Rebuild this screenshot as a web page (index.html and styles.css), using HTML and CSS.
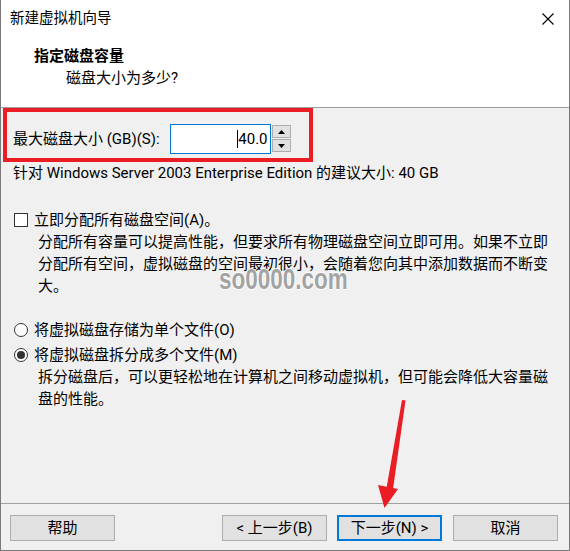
FILE: index.html
```html
<!DOCTYPE html>
<html lang="zh-CN">
<head>
<meta charset="utf-8">
<title>新建虚拟机向导</title>
<link rel="stylesheet" href="styles.css">
</head>
<body>
<div class="window">
  <div class="titlebar">
    <span class="title">新建虚拟机向导</span>
    <svg class="close" width="12" height="12" viewBox="0 0 12 12"><path d="M0.5 0.5 L11.5 11.5 M11.5 0.5 L0.5 11.5" stroke="#000" stroke-width="1.1" fill="none"/></svg>
  </div>
  <div class="header">
    <div class="h-title">指定磁盘容量</div>
    <div class="h-sub">磁盘大小为多少?</div>
  </div>
  <div class="content">
    <div class="size-row">
      <span class="label">最大磁盘大小 (GB)(S):</span>
      <div class="spinbox">
        <div class="input"><span class="caret"></span>40.0</div>
        <div class="spin-btns">
          <div class="spin-btn"><svg width="7" height="4" viewBox="0 0 7 4"><path d="M3.5 0 L7 4 L0 4 Z" fill="#000"/></svg></div>
          <div class="spin-btn"><svg width="7" height="4" viewBox="0 0 7 4"><path d="M0 0 L7 0 L3.5 4 Z" fill="#000"/></svg></div>
        </div>
      </div>
    </div>
    <p class="hint">针对 Windows Server 2003 Enterprise Edition 的建议大小: 40 GB</p>
    <div class="option opt-check"><span class="checkbox"></span><span>立即分配所有磁盘空间(A)。</span></div>
    <p class="desc">分配所有容量可以提高性能，但要求所有物理磁盘空间立即可用。如果不立即分配所有空间，虚拟磁盘的空间最初很小，会随着您向其中添加数据而不断变大。</p>
    <div class="option opt-r1"><span class="radio"></span><span>将虚拟磁盘存储为单个文件(O)</span></div>
    <div class="option opt-r2"><span class="radio checked"></span><span>将虚拟磁盘拆分成多个文件(M)</span></div>
    <p class="desc">拆分磁盘后，可以更轻松地在计算机之间移动虚拟机，但可能会降低大容量磁盘的性能。</p>
  </div>
  <div class="footer">
    <button class="btn">帮助</button>
    <button class="btn btn-back">&lt; 上一步(B)</button>
    <button class="btn btn-next">下一步(N) &gt;</button>
    <button class="btn">取消</button>
  </div>

  <div class="red-box"></div>
  <div class="watermark">so0000.com</div>
  <svg class="arrow" width="40" height="115" viewBox="370 398 40 115">
    <path d="M402 400 L405.5 400.5 L393 489 L386.5 488 Z" fill="#ea1c24"/>
    <path d="M378 485 L398 489 L384.5 508 Z" fill="#ea1c24"/>
  </svg>
</div>
</body>
</html>
```
FILE: styles.css
```css
* { box-sizing: border-box; }
html, body { margin: 0; padding: 0; }
body {
  width: 570px;
  height: 551px;
  font-family: "Roboto", "Noto Sans CJK SC", sans-serif;
  font-size: 15px;
  color: #000;
  background: #f0f0f0;
}
.window {
  position: relative;
  width: 570px;
  height: 551px;
  background: #f0f0f0;
  border-left: 1px solid #7a7a7a;
  border-right: 1px solid #7a7a7a;
  border-bottom: 1px solid #7a7a7a;
  display: flex;
  flex-direction: column;
}
.titlebar {
  height: 38px;
  background: #fff;
  display: flex;
  align-items: center;
  justify-content: space-between;
  padding: 0 15px 0 9px;
}
.title {
  font-size: 14.5px;
  line-height: 20px;
}
.close { display: block; }
.header {
  height: 70px;
  background: #fff;
  padding: 7px 0 0 33px;
  border-bottom: 1px solid #a0a0a0;
}
.h-title {
  font-weight: bold;
  line-height: 22px;
}
.h-sub {
  line-height: 22px;
  padding-left: 32px;
}
.content {
  flex: 1;
  padding: 16px 12px 0 12px;
  display: flex;
  flex-direction: column;
}
.size-row {
  display: flex;
  align-items: center;
  height: 30px;
}
.label { line-height: 22px; }
.spinbox {
  display: flex;
  margin-left: 10px;
  height: 30px;
}
.input {
  width: 101px;
  height: 30px;
  background: #fff;
  border: 1px solid #0078d7;
  display: flex;
  align-items: center;
  justify-content: flex-end;
  padding-right: 2px;
  line-height: 22px;
}
.caret {
  display: inline-block;
  width: 1px;
  height: 18px;
  background: #000;
}
.spin-btns {
  display: flex;
  flex-direction: column;
  padding: 1px 0;
  gap: 1px;
  margin-left: 1px;
}
.spin-btn {
  width: 19px;
  height: 13px;
  background: #e1e1e1;
  border: 1px solid #adadad;
  display: flex;
  align-items: center;
  justify-content: center;
}
.spin-btn svg { display: block; }
.hint {
  margin: 8px 0 0 0;
  line-height: 22px;
}
.option {
  display: flex;
  align-items: center;
  gap: 6px;
  line-height: 22px;
  padding-left: 1px;
}
.opt-check { margin-top: 25px; }
.opt-r1 { margin-top: 22px; }
.opt-r2 { margin-top: 3px; }
.checkbox {
  flex: none;
  width: 14px;
  height: 14px;
  background: #fff;
  border: 1px solid #333;
}
.radio {
  flex: none;
  width: 14px;
  height: 14px;
  border-radius: 50%;
  background: #fff;
  border: 1px solid #333;
  display: flex;
  align-items: center;
  justify-content: center;
}
.radio.checked::after {
  content: "";
  width: 8px;
  height: 8px;
  border-radius: 50%;
  background: #333;
}
.desc {
  margin: 0;
  padding-left: 25px;
  padding-right: 6px;
  line-height: 22px;
}
.footer {
  height: 47px;
  border-top: 1px solid #a0a0a0;
  display: flex;
  align-items: flex-start;
  padding: 11px 11px 0 9px;
  gap: 10px;
}
.btn {
  width: 105px;
  height: 26px;
  font-family: "Roboto", "Noto Sans CJK SC", sans-serif;
  font-size: 15px;
  line-height: 20px;
  background: #e1e1e1;
  border: 1px solid #adadad;
  color: #000;
  padding: 0;
  margin: 0;
}
.btn-back { margin-left: auto; }
.btn-next { border: 2px solid #0078d7; margin-right: 1px; }

.red-box {
  position: absolute;
  left: 2px;
  top: 108px;
  width: 310px;
  height: 54px;
  border: 4px solid #ea1c24;
}
.watermark {
  position: absolute;
  left: 218px;
  top: 264px;
  font-family: "Liberation Sans", sans-serif;
  font-weight: bold;
  font-size: 30px;
  line-height: 30px;
  color: #a3a3a3;
  transform: scaleX(0.75);
  transform-origin: 0 0;
  text-shadow: 1px 0 0 #fff, -1px 0 0 #fff, 0 1px 0 #fff, 0 -1px 0 #fff;
}
.arrow {
  position: absolute;
  left: 369px;
  top: 398px;
}
```
